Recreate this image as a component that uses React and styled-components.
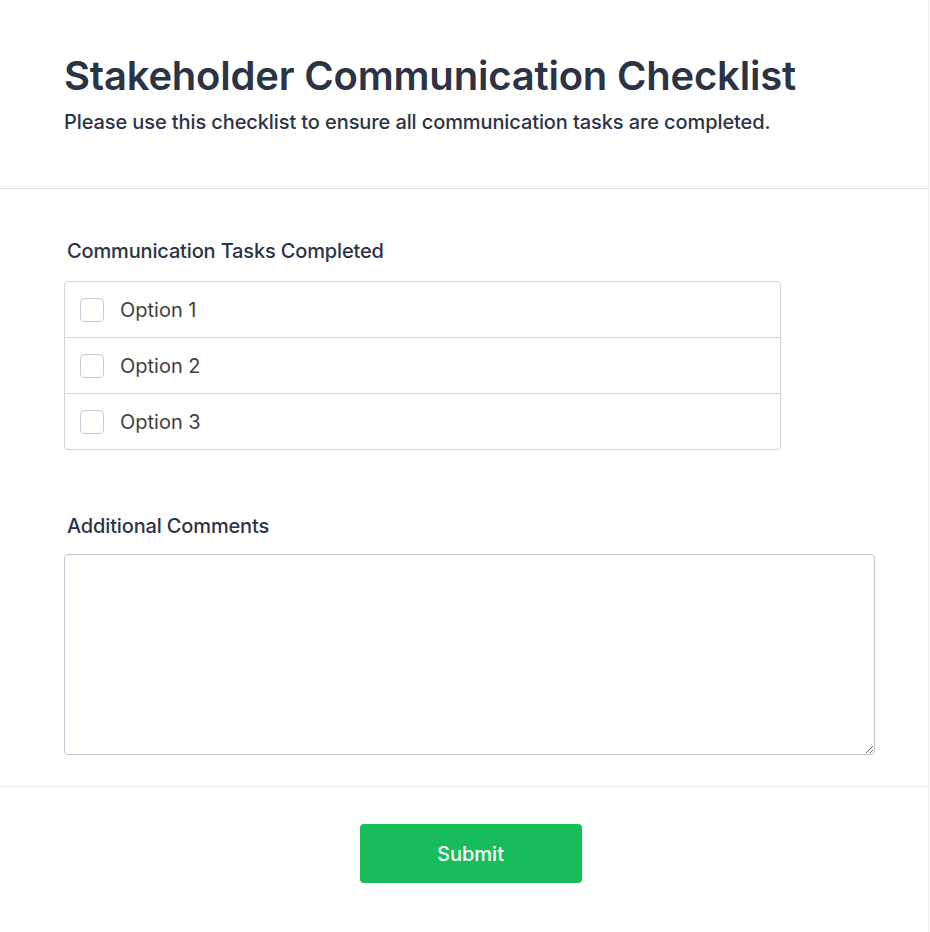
import styled, { createGlobalStyle } from 'styled-components';

const OPTIONS = ['Option 1', 'Option 2', 'Option 3'];

const GlobalStyle = createGlobalStyle`
  * { box-sizing: border-box; }
  body {
    margin: 0;
    background: #fff;
    font-family: Inter, 'Noto Sans', sans-serif;
    color: #2c3345;
  }
`;

function App() {
  return (
    <>
      <GlobalStyle />
      <Card>
        <Header>
          <Title>Stakeholder Communication Checklist</Title>
          <Subtitle>Please use this checklist to ensure all communication tasks are completed.</Subtitle>
        </Header>

        <Body>
          <Field $gap={18}>
            <Label>Communication Tasks Completed</Label>
            <OptionList>
              {OPTIONS.map((o) => (
                <OptionRow key={o}>
                  <Box type="checkbox" />
                  <OptionText>{o}</OptionText>
                </OptionRow>
              ))}
            </OptionList>
          </Field>

          <Field $gap={16}>
            <Label>Additional Comments</Label>
            <Comments />
          </Field>
        </Body>

        <Footer>
          <SubmitButton type="button">Submit</SubmitButton>
        </Footer>
      </Card>
    </>
  );
}

export default App;

const Card = styled.div`
  width: 929px;
  min-height: 932px;
  background: #fff;
  border-right: 1px solid #f1f1f5;
`;

const Header = styled.header`
  padding: 52px 64px 51px;
  border-bottom: 1px solid #e2e3e9;
`;

const Title = styled.h1`
  margin: 0 0 7px;
  font-size: 40px;
  line-height: 48px;
  font-weight: 600;
  letter-spacing: -0.2px;
  color: #2c3345;
`;

const Subtitle = styled.p`
  margin: 0;
  font-size: 20px;
  line-height: 30px;
  font-weight: 500;
  letter-spacing: -0.1px;
  color: #2c3345;
`;

const Body = styled.main`
  padding: 50px 54px 31px 64px;
  display: flex;
  flex-direction: column;
  gap: 64px;
  border-bottom: 1px solid #eaebf0;
`;

const Field = styled.section`
  display: flex;
  flex-direction: column;
  gap: ${(p) => p.$gap}px;
`;

const Label = styled.label`
  padding-left: 3px;
  font-size: 20px;
  line-height: 24px;
  font-weight: 500;
  letter-spacing: -0.15px;
  color: #2c3345;
`;

const OptionList = styled.div`
  width: 717px;
  border: 1px solid #d3d3d6;
  border-radius: 4px;
`;

const OptionRow = styled.div`
  height: 55px;
  display: flex;
  align-items: center;
  gap: 16px;
  padding: 0 15px;

  & + & {
    height: 56px;
    border-top: 1px solid #d3d3d6;
  }
`;

const Box = styled.input`
  appearance: none;
  margin: 0;
  width: 24px;
  height: 24px;
  border: 1px solid #c3cad8;
  border-radius: 4px;
  background: #fff;
`;

const OptionText = styled.span`
  font-size: 20px;
  color: #443e3e;
`;

const Comments = styled.textarea`
  display: block;
  width: 811px;
  height: 201px;
  border: 1px solid #c3c6d4;
  border-radius: 4px;
  font: inherit;
`;

const Footer = styled.footer`
  display: flex;
  justify-content: center;
  padding: 37px 0 48px 13px;
`;

const SubmitButton = styled.button`
  width: 222px;
  height: 59px;
  border: none;
  border-radius: 4px;
  background: #18bd5b;
  color: #fff;
  font-family: Inter, sans-serif;
  font-size: 20px;
  font-weight: 500;
`;
